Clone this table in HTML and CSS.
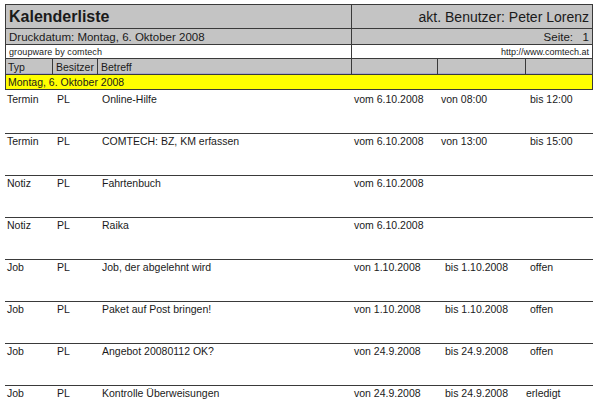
FILE: index.html
```html
<!DOCTYPE html>
<html lang="de">
<head>
<meta charset="utf-8">
<title>Kalenderliste</title>
<link rel="stylesheet" href="styles.css">
</head>
<body>
<div class="report">
  <div class="head">
    <div class="hrow title">
      <div class="cell left"><span class="big">Kalenderliste</span></div>
      <div class="cell right"><span class="user">akt. Benutzer: Peter Lorenz</span></div>
    </div>
    <div class="hrow druck">
      <div class="cell left">Druckdatum: Montag, 6. Oktober 2008</div>
      <div class="cell right">Seite:&nbsp;&nbsp;&nbsp;1</div>
    </div>
    <div class="hrow gw">
      <div class="cell left">groupware by comtech</div>
      <div class="cell right">http://www.comtech.at</div>
    </div>
    <div class="cols">
      <div class="c">Typ</div>
      <div class="c">Besitzer</div>
      <div class="c">Betreff</div>
      <div class="c"></div>
      <div class="c"></div>
      <div class="c"></div>
    </div>
    <div class="day">Montag, 6. Oktober 2008</div>
  </div>
  <div class="rows">
    <div class="row"><span>Termin</span><span>PL</span><span>Online-Hilfe</span><span>vom 6.10.2008</span><span>von 08:00</span><span>bis 12:00</span></div>
    <div class="row"><span>Termin</span><span>PL</span><span>COMTECH: BZ, KM erfassen</span><span>vom 6.10.2008</span><span>von 13:00</span><span>bis 15:00</span></div>
    <div class="row"><span>Notiz</span><span>PL</span><span>Fahrtenbuch</span><span>vom 6.10.2008</span><span></span><span></span></div>
    <div class="row"><span>Notiz</span><span>PL</span><span>Raika</span><span>vom 6.10.2008</span><span></span><span></span></div>
    <div class="row"><span>Job</span><span>PL</span><span>Job, der abgelehnt wird</span><span>von 1.10.2008</span><span class="shift">bis 1.10.2008</span><span>offen</span></div>
    <div class="row"><span>Job</span><span>PL</span><span>Paket auf Post bringen!</span><span>von 1.10.2008</span><span class="shift">bis 1.10.2008</span><span>offen</span></div>
    <div class="row"><span>Job</span><span>PL</span><span>Angebot 20080112 OK?</span><span>von 24.9.2008</span><span class="shift">bis 24.9.2008</span><span>offen</span></div>
    <div class="row last"><span>Job</span><span>PL</span><span>Kontrolle Überweisungen</span><span>von 24.9.2008</span><span class="shift">bis 24.9.2008</span><span class="back">erledigt</span></div>
  </div>
</div>
</body>
</html>
```

FILE: styles.css
```css
html, body {
  margin: 0;
  padding: 0;
  background: #ffffff;
}
body {
  font-family: "Liberation Sans", Arial, sans-serif;
  color: #1a1a1a;
  overflow: hidden;
}
.report {
  margin: 4px 0 0 5px;
  width: 588px;
}
.head {
  border: 1px solid #3a3a3a;
  border-bottom: none;
}
.hrow {
  display: grid;
  grid-template-columns: 346px 1fr;
  background: #c4c4c4;
  border-bottom: 1px solid #3a3a3a;
}
.hrow .cell {
  display: flex;
  align-items: center;
  overflow: hidden;
  white-space: nowrap;
}
.hrow .left {
  border-right: 1px solid #3a3a3a;
  padding-left: 3px;
}
.hrow .right {
  justify-content: flex-end;
  padding-right: 3px;
}
.title {
  height: 23px;
}
.big {
  font-weight: bold;
  font-size: 16px;
}
.user {
  font-size: 14px;
}
.druck {
  height: 15px;
  font-size: 11.5px;
}
.gw {
  height: 13px;
  background: #ffffff;
}
.gw .left {
  font-size: 9px;
  letter-spacing: 0.1px;
}
.gw .right {
  font-size: 9px;
}
.cols {
  display: grid;
  grid-template-columns: 47px 45px 254px 86px 88px 1fr;
  height: 15px;
  background: #c4c4c4;
  border-bottom: 1px solid #3a3a3a;
  box-shadow: inset 0 -1px 0 #a8a8d0;
  font-size: 10.5px;
}
.cols .c {
  border-right: 1px solid #3a3a3a;
  padding-left: 3px;
  display: flex;
  align-items: center;
  white-space: nowrap;
}
.cols .c:first-child {
  padding-left: 2px;
}
.cols .c:last-child {
  border-right: none;
}
.day {
  background: #ffff00;
  height: 14px;
  border-bottom: 1px solid #3a3a3a;
  font-size: 10.5px;
  padding-left: 2px;
  display: flex;
  align-items: center;
}
.rows {
  padding-top: 2px;
}
.row {
  box-sizing: border-box;
  height: 42px;
  display: grid;
  grid-template-columns: 50px 45px 252px 87px 89px 1fr;
  padding: 1px 0 0 2px;
  border-bottom: 1px solid #3a3a3a;
  font-size: 10.5px;
  line-height: 12px;
  white-space: nowrap;
}
.row.last {
  border-bottom: none;
}
.shift {
  padding-left: 4px;
}
.back {
  margin-left: -4px;
}
```
